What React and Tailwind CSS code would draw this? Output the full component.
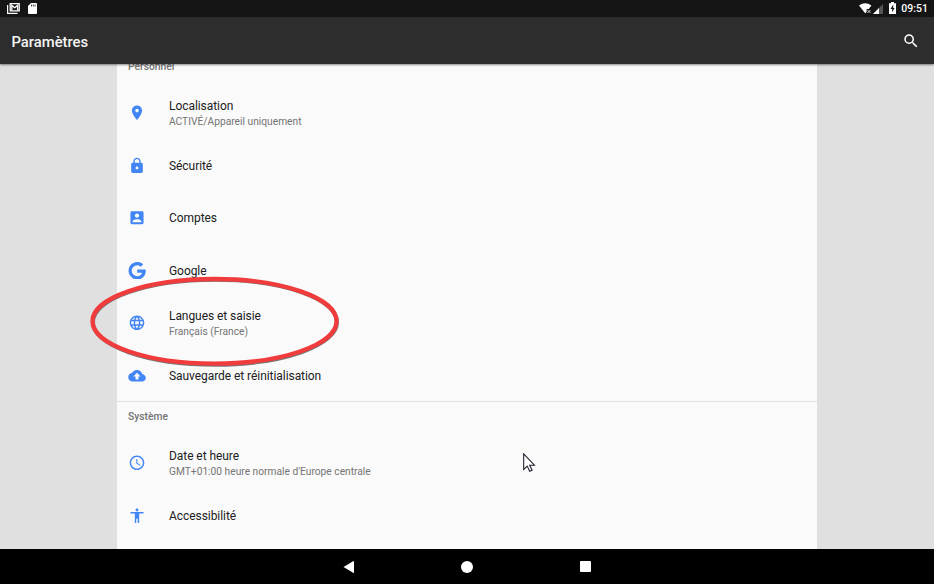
import React from 'react';

const paths = {
  pin: 'M12 2C8.13 2 5 5.13 5 9c0 5.25 7 13 7 13s7-7.75 7-13c0-3.87-3.13-7-7-7zm0 9.5a2.5 2.5 0 0 1 0-5 2.5 2.5 0 0 1 0 5z',
  lock: 'M18 8h-1V6c0-2.76-2.24-5-5-5S7 3.24 7 6v2H6c-1.1 0-2 .9-2 2v10c0 1.1.9 2 2 2h12c1.1 0 2-.9 2-2V10c0-1.100-.9-2-2-2zm-6 9c-1.100 0-2-.9-2-2s.9-2 2-2 2 .9 2 2-.9 2-2 2zm3.100-9H8.900V6c0-1.710 1.390-3.100 3.100-3.100s3.100 1.390 3.100 3.100v2z',
  account: 'M3 5v14c0 1.100.89 2 2 2h14c1.100 0 2-.9 2-2V5c0-1.100-.9-2-2-2H5c-1.110 0-2 .9-2 2zm12 4c0 1.660-1.340 3-3 3s-3-1.340-3-3 1.340-3 3-3 3 1.340 3 3zm-9 8c0-2 4-3.100 6-3.100s6 1.100 6 3.100v1H6v-1z',
  google: 'M23.9 10.200H12.200v4.500h6.700c-.7 2.900-3.200 4.700-6.700 4.700a7.400 7.400 0 1 1 4.900-12.900l3.400-3.400A12 12 0 1 0 12.200 24c6.500 0 11.800-4.700 11.800-12 0-.6 0-1.200-.1-1.800z',
  globe: 'M11.990 2C6.470 2 2 6.480 2 12s4.470 10 9.990 10C17.520 22 22 17.520 22 12S17.520 2 11.990 2zm6.930 6h-2.950c-.32-1.250-.78-2.450-1.380-3.560 1.840.63 3.370 1.910 4.330 3.560zM12 4.040c.83 1.200 1.480 2.530 1.910 3.960h-3.820c.43-1.430 1.080-2.760 1.910-3.960zM4.260 14C4.100 13.360 4 12.690 4 12s.1-1.360.26-2h3.380c-.08.66-.14 1.320-.14 2s.06 1.340.14 2H4.260zm.82 2h2.950c.32 1.250.78 2.450 1.380 3.560-1.840-.63-3.370-1.900-4.330-3.560zm2.950-8H5.080c.96-1.660 2.490-2.930 4.330-3.560C8.810 5.550 8.350 6.750 8.030 8zM12 19.960c-.83-1.200-1.480-2.530-1.910-3.960h3.820c-.43 1.430-1.080 2.760-1.910 3.960zM14.340 14H9.660c-.09-.66-.16-1.320-.16-2s.07-1.350.16-2h4.680c.09.65.16 1.320.16 2s-.07 1.340-.16 2zm.25 5.560c.6-1.110 1.060-2.310 1.380-3.560h2.950c-.96 1.650-2.490 2.930-4.330 3.560zM16.360 14c.08-.66.14-1.320.14-2s-.06-1.340-.14-2h3.380c.16.64.26 1.310.26 2s-.1 1.360-.26 2h-3.380z',
  cloud: 'M19.350 10.040C18.670 6.590 15.640 4 12 4 9.110 4 6.600 5.640 5.350 8.040 2.340 8.360 0 10.910 0 14c0 3.310 2.690 6 6 6h13c2.760 0 5-2.240 5-5 0-2.640-2.050-4.780-4.650-4.960zM14 13v4h-4v-4H7l5-5 5 5h-3z',
  clock: 'M11.990 2C6.470 2 2 6.480 2 12s4.470 10 9.990 10C17.520 22 22 17.520 22 12S17.520 2 11.990 2zM12 20c-4.420 0-8-3.580-8-8s3.580-8 8-8 8 3.580 8 8-3.580 8-8 8zm.5-13H11v6l5.250 3.150.75-1.230-4.500-2.670z',
  accessibility: 'M12 2c1.100 0 2 .9 2 2s-.9 2-2 2-2-.9-2-2 .9-2 2-2zm9 7h-6v13h-2v-6h-2v6H9V9H3V7h18v2z',
};

function Icon({ name }) {
  return (
    <svg viewBox="0 0 24 24" className="mt-px ml-[11px] h-[17.5px] w-[18px] shrink-0 fill-[#4285f4]">
      <path fillRule="evenodd" d={paths[name]} />
    </svg>
  );
}

function Row({ icon, title, detail }) {
  return (
    <li className="flex h-[52.5px] items-center">
      <Icon name={icon} />
      <div className="ml-[23px] pt-[3px]">
        <p className="text-[12px] leading-[15px] tracking-[-0.06px] text-[#212121]">{title}</p>
        {detail && <p className="-mt-[0.5px] text-[10.22px] leading-[15px] text-[#757575]">{detail}</p>}
      </div>
    </li>
  );
}

const personal = [
  { icon: 'pin', title: 'Localisation', detail: 'ACTIVÉ/Appareil uniquement' },
  { icon: 'lock', title: 'Sécurité' },
  { icon: 'account', title: 'Comptes' },
  { icon: 'google', title: 'Google' },
  { icon: 'globe', title: 'Langues et saisie', detail: 'Français (France)' },
  { icon: 'cloud', title: 'Sauvegarde et réinitialisation' },
];

const system = [
  { icon: 'clock', title: 'Date et heure', detail: "GMT+01:00 heure normale d'Europe centrale" },
  { icon: 'accessibility', title: 'Accessibilité' },
];

function StatusBar() {
  return (
    <div className="flex h-[17px] items-center justify-between bg-[#151515] pr-[6px] pl-[7px] text-white">
      <div className="flex items-center gap-[8px]">
        <svg viewBox="0 0 13 11" className="h-[11px] w-[13px]" fill="none" stroke="#fff">
          <path d="M.6 2v8.400h9.900" strokeWidth="1.200" />
          <path d="M3.200.7h9v7.200h-9z" strokeWidth="1.300" />
          <path d="M4.800 7.500V2.400l2.900 2.300 2.900-2.300v5.100" strokeWidth="1.300" />
        </svg>
        <svg viewBox="0 0 9 11" className="h-[11px] w-[9px]">
          <path d="M3 0h5a1 1 0 0 1 1 1v9a1 1 0 0 1-1 1H1a1 1 0 0 1-1-1V3z" fill="#fff" />
          <path d="M3.500 1.500v2M5.300 1.500v2M7.100 1.500v2" stroke="#151515" strokeWidth=".8" />
        </svg>
      </div>
      <div className="flex items-center">
        <svg viewBox="0 0 13 11" className="h-[11px] w-[13px]">
          <path d="M0 2.600Q6.200-1.900 12.400 2.600L9.800 6H7.600v3L6.200 10.300z" fill="#fff" />
          <path d="m8.500 7 3 3m0-3-3 3" stroke="#ddd" strokeWidth=".9" />
        </svg>
        <svg viewBox="0 0 10 10" className="mt-[1px] ml-px h-[10px] w-[10px]">
          <path d="M0 10 10 0v10z" fill="#555" />
          <path d="M0 10 6 4v6z" fill="#fff" />
        </svg>
        <svg viewBox="0 0 7 12" className="mb-[1px] ml-[6px] h-[12px] w-[7px]">
          <path d="M2 0h3v1.200h2V12H0V1.200h2z" fill="#fff" />
          <path d="M4.200 2.600 1.500 7h1.700v3.200L5.600 6H4.200z" fill="#151515" />
        </svg>
        <span className="ml-[5px] pt-px text-[10.5px] leading-[16px] font-medium">09:51</span>
      </div>
    </div>
  );
}

export default function App() {
  return (
    <div className="relative flex h-[584px] w-[934px] flex-col overflow-hidden bg-[#e0e0e0] font-['Roboto','Liberation_Sans',sans-serif]">
      <StatusBar />
      <header className="z-10 flex h-[47px] shrink-0 items-center justify-between bg-[#2d2d2d] pr-[14.5px] pl-[11.5px] shadow-[0_1px_2px_rgba(0,0,0,0.45)]">
        <h1 className="pt-[3px] text-[14.8px] font-medium text-[#f5f5f5]">Paramètres</h1>
        <svg viewBox="0 0 24 24" className="h-[18px] w-[18px] fill-white">
          <path d="M15.500 14h-.79l-.28-.27A6.470 6.470 0 0 0 16 9.500 6.500 6.500 0 1 0 9.500 16c1.610 0 3.090-.59 4.230-1.570l.27.28v.79l5 4.990L20.490 19zm-6 0C7.010 14 5 11.990 5 9.500S7.010 5 9.500 5 14 7.010 14 9.500 11.990 14 9.500 14z" />
        </svg>
      </header>

      <main className="mx-[117px] h-[485px] shrink-0 overflow-hidden bg-[#fafafa]">
        <h2 className="-mt-[5.5px] h-[27.5px] pl-[11px] text-[10.3px] leading-[15px] font-medium text-[#757575]">Personnel</h2>
        <ul>
          {personal.map((item) => (
            <Row key={item.title} {...item} />
          ))}
        </ul>
        <h2 className="h-[35px] border-t border-[#e0e0e0] pt-[7px] pl-[11px] text-[10.3px] leading-[15px] font-medium text-[#757575]">Système</h2>
        <ul>
          {system.map((item) => (
            <Row key={item.title} {...item} />
          ))}
        </ul>
      </main>

      <nav className="flex h-[35px] shrink-0 items-center justify-center bg-black">
        <svg viewBox="0 0 12 12" className="h-[12px] w-[12px] fill-white">
          <path d="M.5 6 10.500 0Q11 0 11 .5v11q0 .5-.5.5z" />
        </svg>
        <span className="ml-[106px] h-[12px] w-[12px] rounded-full bg-white" />
        <span className="ml-[107px] h-[11px] w-[11px] rounded-[1px] bg-white" />
      </nav>

      <svg viewBox="0 0 252 94" className="absolute top-[275px] left-[89px] z-20 h-[94px] w-[252px]" fill="none">
        <ellipse cx="126" cy="47.200" rx="122" ry="42.500" stroke="#777" strokeWidth="4" />
        <ellipse cx="125.500" cy="46.300" rx="122" ry="42.300" stroke="#f03c3c" strokeWidth="4.300" />
      </svg>
      <svg viewBox="0 0 13 20" className="absolute top-[453px] left-[523px] z-20 h-[20px] w-[13px]">
        <path d="M.7.9v15.500l3.500-3.300 2.500 5.200 2.400-1.100-2.400-5h4.700z" fill="#fff" stroke="#202030" strokeWidth="1.100" />
      </svg>
    </div>
  );
}
